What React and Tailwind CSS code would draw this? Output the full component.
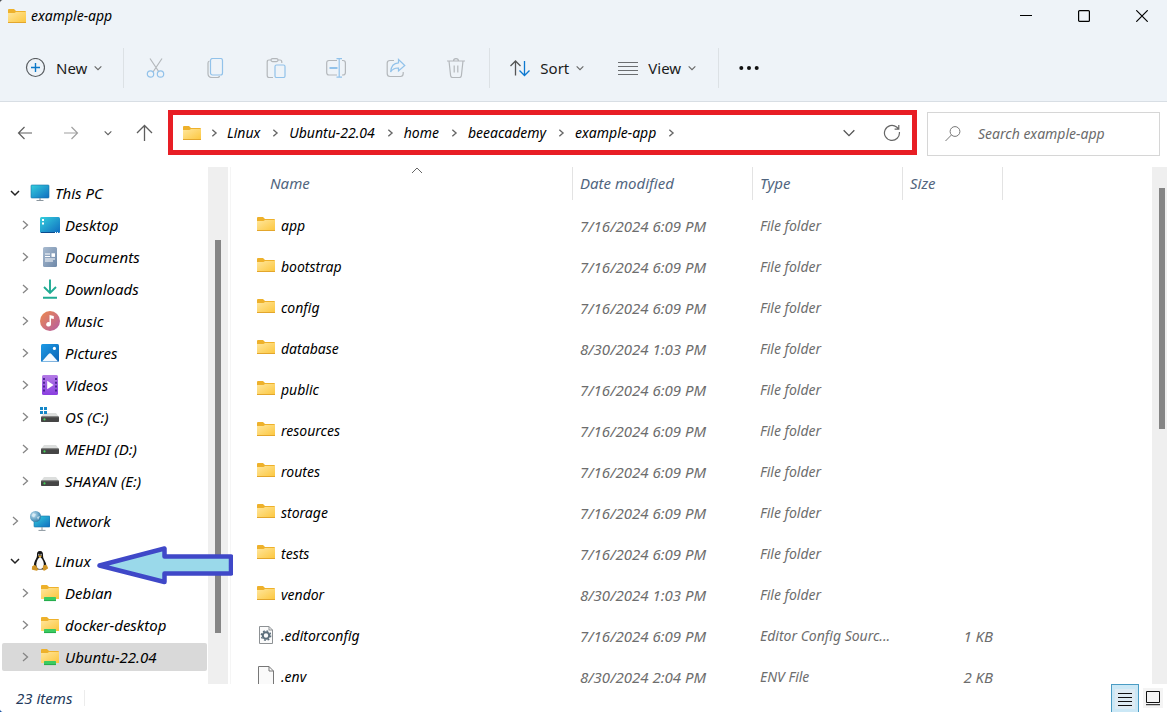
import React from 'react';

const chevronPaths = {
    right: 'M4 2 L8.5 6 L4 10',
    down: 'M2 4 L6 8 L10 4',
    up: 'M1 9 L6 4 L11 9',
};

const Chevron = ({ dir = 'right', className = '', width = 1.3 }) => (
    <svg viewBox="0 0 12 12" className={className} fill="none" stroke="currentColor" strokeWidth={width}>
        <path d={chevronPaths[dir]} />
    </svg>
);

// Shared gradients, referenced by id from the icons below
const Gradients = () => (
    <svg width="0" height="0" className="absolute" aria-hidden="true">
        <defs>
            <linearGradient id="folder" x1="0" y1="0" x2="1" y2="1">
                <stop offset="0" stopColor="#ffe69c" />
                <stop offset="1" stopColor="#fcc63c" />
            </linearGradient>
            <linearGradient id="screen" x1="0" y1="0" x2="1" y2="1">
                <stop offset="0" stopColor="#35d0dd" />
                <stop offset="1" stopColor="#0f6cc0" />
            </linearGradient>
            <linearGradient id="paper" x1="0" y1="0" x2="1" y2="1">
                <stop offset="0" stopColor="#a9bbd0" />
                <stop offset="1" stopColor="#6e88a8" />
            </linearGradient>
            <linearGradient id="music" x1="0" y1="0" x2="1" y2="1">
                <stop offset="0" stopColor="#ee8a4c" />
                <stop offset="1" stopColor="#b45ca4" />
            </linearGradient>
            <linearGradient id="video" x1="0" y1="0" x2="0" y2="1">
                <stop offset="0" stopColor="#b47be6" />
                <stop offset="1" stopColor="#8a3fe0" />
            </linearGradient>
            <linearGradient id="picture" x1="0" y1="0" x2="1" y2="1">
                <stop offset="0" stopColor="#1d9be6" />
                <stop offset="1" stopColor="#0a62b4" />
            </linearGradient>
            <radialGradient id="globe" cx="0.35" cy="0.35" r="0.7">
                <stop offset="0" stopColor="#c4e2f2" />
                <stop offset="1" stopColor="#2c7ba8" />
            </radialGradient>
        </defs>
    </svg>
);

const FolderIcon = ({ className = 'w-[18px] h-[14px]' }) => (
    <svg viewBox="0 0 18 14" className={className}>
        <path d="M0 1 Q0 0 1 0 H6 L8 2 H17 Q18 2 18 3 V6 H0 Z" fill="#eeb12b" />
        <path d="M0 4 H6.5 L8 3 H18 V13 Q18 14 17 14 H1 Q0 14 0 13 Z" fill="url(#folder)" />
        <path d="M0 13.5 H18" stroke="#e3a62c" />
    </svg>
);

const Monitor = () => (
    <>
        <rect x="1" y="2" width="18" height="13" rx="0.8" fill="url(#screen)" stroke="#1673a8" strokeWidth="0.6" />
        <path d="M10 15 V17 M6.5 17.5 H13.5" stroke="#8b969e" strokeWidth="1.2" />
    </>
);

const Drive = () => (
    <>
        <path d="M4 6 H16 L19 10 H1 Z" fill="#dcdedd" />
        <rect x="1" y="9.5" width="18" height="5.5" rx="0.8" fill="#454545" />
        <path d="M1.5 10 H18.5" stroke="#707070" strokeWidth="0.7" />
        <circle cx="4.5" cy="12.4" r="1.1" fill="#45d15a" />
    </>
);

const treeIcons = {
    pc: <Monitor />,
    desktop: (
        <>
            <rect x="0" y="2" width="20" height="16" rx="1.5" fill="url(#screen)" />
            <path d="M1 17.5 H15" stroke="#0b4b8d" strokeWidth="1" />
            <path d="M2 4 h2 v2 h-2 z M2 7.5 h2 v2 h-2 z M15 17 h1 v1 h-1 z M17 17 h1 v1 h-1 z" fill="#fff" />
        </>
    ),
    documents: (
        <>
            <rect x="3" y="0" width="14" height="20" rx="1.5" fill="url(#paper)" />
            <path d="M5 7 H10 M5 9.5 H10 M5 12 H15 M5 14 H13" stroke="#fff" strokeWidth="1.2" />
            <rect x="11.5" y="6.3" width="3.5" height="3.6" fill="#fff" />
        </>
    ),
    downloads: (
        <path d="M10 0.5 V14 M4 8 L10 14 L16 8 M3 18.8 H17" fill="none" stroke="#1fab93" strokeWidth="1.9" />
    ),
    music: (
        <>
            <circle cx="10" cy="10" r="10" fill="url(#music)" />
            <path d="M9.5 4 L13.8 5 V8 L11 7.4 V13.5 A2.4 2.2 0 1 1 9.5 11.3 Z" fill="#fff" />
        </>
    ),
    pictures: (
        <>
            <rect x="1" y="1" width="18" height="18" rx="1.5" fill="url(#picture)" />
            <path d="M2 18.5 L8.6 11 Q10 9.6 11.4 11 L18 18.5 Z" fill="#f2f9ff" />
            <circle cx="14.4" cy="5.4" r="1.6" fill="#fff" />
        </>
    ),
    videos: (
        <>
            <rect x="2" y="0" width="16" height="20" rx="1.5" fill="url(#video)" />
            <path d="M4 3 V18 M16 3 V18" stroke="#44208c" strokeWidth="1.8" strokeDasharray="2 1.8" />
            <path d="M7.2 5.8 L13.6 10 L7.2 14.2 Z" fill="#fff" />
        </>
    ),
    os: (
        <>
            <Drive />
            <path d="M0 0 h3 v3 h-3 z M4 0 h3 v3 h-3 z M0 4 h3 v3 h-3 z M4 4 h3 v3 h-3 z" fill="#1687c8" />
        </>
    ),
    drive: <Drive />,
    network: (
        <>
            <rect x="4" y="5" width="16" height="11" rx="0.8" fill="url(#screen)" stroke="#1673a8" strokeWidth="0.6" />
            <path d="M12 16 V19 M8.5 19.4 H15.5" stroke="#8b969e" strokeWidth="1" />
            <circle cx="5.5" cy="5.5" r="5.5" fill="url(#globe)" />
            <path d="M3 2 L6 3.5 L4 6.5 L1.5 5 Z M7 6 L10 5 L8 9 Z" fill="#e6f3f9" opacity="0.7" />
        </>
    ),
    linux: (
        <>
            <path d="M10 0 C7.4 0 6.8 1.8 7 4.6 C7.1 7 5 9 4.2 12 C3.6 14.4 3.8 17.6 6 18.4 H14 C16.4 17.6 16.6 14.2 15.8 12 C14.8 8.8 12.8 7.2 13 4.4 C13.1 1.6 12.4 0 10 0 Z" fill="#151515" />
            <path d="M10 6 C8 7.2 6.3 10.4 6.3 13.4 C6.3 16.6 7.6 18 10 18 C12.4 18 13.8 16.4 13.8 13.4 C13.8 10.4 12 7 10 6 Z" fill="#fafafa" />
            <ellipse cx="8.8" cy="3.7" rx="0.8" ry="1" fill="#aaa" />
            <ellipse cx="11.1" cy="3.7" rx="0.8" ry="1" fill="#aaa" />
            <path d="M8 5 L10 4.4 L12 5.1 L10 6.8 Z" fill="#efb02a" />
            <path d="M4.2 13.8 C5.5 13.8 6.8 16.2 7.8 17.4 C8.6 18.8 7.4 20 5.8 19.6 L2.2 18.8 C1.3 18.2 2.4 17 2 15.6 C2.2 14.8 3.6 15.2 4.2 13.8 Z" fill="#cf9426" />
            <path d="M15.8 13.8 C14.5 13.6 13.2 14.4 12.9 16 C12.6 18 12.4 19.4 14.2 19.7 C15.6 19.6 16 18.6 18 17.6 C18.6 17 17.4 16.2 17.2 14.8 Z" fill="#cf9426" />
        </>
    ),
    distro: (
        <>
            <path d="M1 3 Q1 2 2 2 H7 L9 4 H18 Q19 4 19 5 V8 H1 Z" fill="#eeb12b" />
            <path d="M1 6 H7.5 L9 5 H19 V16 H1 Z" fill="url(#folder)" />
            <rect x="4" y="14" width="12" height="4" rx="0.6" fill="#3bcb61" />
            <path d="M4 17.6 H16" stroke="#1ea146" strokeWidth="0.8" />
        </>
    ),
};

const treeGroups = [
    {
        label: 'This PC', icon: 'pc', open: true,
        children: [
            { label: 'Desktop', icon: 'desktop' },
            { label: 'Documents', icon: 'documents' },
            { label: 'Downloads', icon: 'downloads' },
            { label: 'Music', icon: 'music' },
            { label: 'Pictures', icon: 'pictures' },
            { label: 'Videos', icon: 'videos' },
            { label: 'OS (C:)', icon: 'os' },
            { label: 'MEHDI (D:)', icon: 'drive' },
            { label: 'SHAYAN (E:)', icon: 'drive' },
        ],
    },
    { label: 'Network', icon: 'network', children: [] },
    {
        label: 'Linux', icon: 'linux', open: true,
        children: [
            { label: 'Debian', icon: 'distro' },
            { label: 'docker-desktop', icon: 'distro' },
            { label: 'Ubuntu-22.04', icon: 'distro', selected: true },
        ],
    },
];

const files = [
    { name: 'app', date: '7/16/2024 6:09 PM', type: 'File folder' },
    { name: 'bootstrap', date: '7/16/2024 6:09 PM', type: 'File folder' },
    { name: 'config', date: '7/16/2024 6:09 PM', type: 'File folder' },
    { name: 'database', date: '8/30/2024 1:03 PM', type: 'File folder' },
    { name: 'public', date: '7/16/2024 6:09 PM', type: 'File folder' },
    { name: 'resources', date: '7/16/2024 6:09 PM', type: 'File folder' },
    { name: 'routes', date: '7/16/2024 6:09 PM', type: 'File folder' },
    { name: 'storage', date: '7/16/2024 6:09 PM', type: 'File folder' },
    { name: 'tests', date: '7/16/2024 6:09 PM', type: 'File folder' },
    { name: 'vendor', date: '8/30/2024 1:03 PM', type: 'File folder' },
    { name: '.editorconfig', date: '7/16/2024 6:09 PM', type: 'Editor Config Sourc...', size: '1 KB', icon: 'config' },
    { name: '.env', date: '8/30/2024 2:04 PM', type: 'ENV File', size: '2 KB', icon: 'file' },
];

const crumbs = ['Linux', 'Ubuntu-22.04', 'home', 'beeacademy', 'example-app'];

// Disabled file actions: grey outline with a light blue accent
const fileActions = [
    {
        label: 'Cut',
        art: (
            <>
                <path d="M4 0.5 L13 14 M16 0.5 L7 14" stroke="#b3b7bb" />
                <circle cx="4.5" cy="16" r="3.2" stroke="#92c2ea" />
                <circle cx="14.5" cy="16" r="3.2" stroke="#92c2ea" />
            </>
        ),
    },
    {
        label: 'Copy',
        art: (
            <>
                <path d="M3.5 3 Q2 3.4 2 5 V15.5 Q2 19.5 6 19.5 H11.5 Q13.2 19.5 13.6 18" stroke="#b3b7bb" />
                <rect x="4.5" y="0.5" width="12" height="16.5" rx="2" stroke="#92c2ea" />
            </>
        ),
    },
    {
        label: 'Paste',
        art: (
            <>
                <path d="M5 2 H3 Q1.2 2 1.2 4 V17.5 Q1.2 19.5 3 19.5 H7 M12 2 H14 Q15.8 2 15.8 4 V5" stroke="#b3b7bb" />
                <rect x="5" y="0.6" width="7" height="3" rx="1.5" stroke="#b3b7bb" />
                <rect x="9" y="7" width="10" height="12.5" rx="1.5" stroke="#92c2ea" />
            </>
        ),
    },
    {
        label: 'Rename',
        art: (
            <>
                <path d="M11 2.5 H3 Q0.7 2.5 0.7 5 V14.5 Q0.7 17 3 17 H11 M16 2.5 H17 Q19.4 2.5 19.4 5 V14.5 Q19.4 17 17 17 H16" stroke="#b3b7bb" />
                <path d="M10.5 0.6 H16 M10.5 19.2 H16 M13.2 0.6 V19.2" stroke="#92c2ea" />
                <path d="M3.5 10 H11.5" stroke="#92c2ea" strokeWidth="2" />
            </>
        ),
    },
    {
        label: 'Share',
        art: (
            <>
                <path d="M8 2.5 H4 Q1.2 2.5 1.2 5 V15.5 Q1.2 18.5 4 18.5 H14.5 Q17.2 18.5 17.2 15.5 V14" stroke="#b3b7bb" />
                <path d="M12.5 1.5 L18.8 7.5 L12.5 13 V10 C8.6 9.8 6.5 11 4.6 14 C5 8.5 8 5 12.5 4.8 Z" stroke="#92c2ea" />
            </>
        ),
    },
    {
        label: 'Delete',
        art: (
            <path d="M1 3 H19 M7.5 3 Q7.5 0.6 10 0.6 Q12.5 0.6 12.5 3 M3 3 L4.6 17.5 Q4.8 19.5 6.6 19.5 H13.4 Q15.2 19.5 15.4 17.5 L17 3 M8.2 7.5 V14.5 M11.8 7.5 V14.5" stroke="#b3b7bb" />
        ),
    },
];

const TitleBar = () => (
    <div className="flex h-8 items-center pl-2 pr-[2px]">
        <FolderIcon />
        <h1 className="ml-[5px] flex-1 text-sm italic">example-app</h1>
        <div className="flex gap-3">
            <button type="button" aria-label="Minimize" className="flex h-[30px] w-[46px] items-center justify-center">
                <svg viewBox="0 0 12 12" className="size-3"><path d="M0 5.5 H12" stroke="#000" /></svg>
            </button>
            <button type="button" aria-label="Maximize" className="flex h-[30px] w-[46px] items-center justify-center">
                <svg viewBox="0 0 12 12" className="size-3"><rect x="0.6" y="0.6" width="10.8" height="10.8" rx="1" fill="none" stroke="#000" strokeWidth="1.2" /></svg>
            </button>
            <button type="button" aria-label="Close" className="flex h-[30px] w-[46px] items-center justify-center">
                <svg viewBox="0 0 12 12" className="size-3"><path d="M0.3 0.3 L11.7 11.7 M11.7 0.3 L0.3 11.7" stroke="#000" strokeWidth="1.2" /></svg>
            </button>
        </div>
    </div>
);

const Separator = () => <div className="h-10 w-px bg-[#dce1e5]" />;

const Toolbar = () => (
    <div className="flex h-[69px] items-center pb-px pt-1 text-[15px] text-[#1b1b1b]">
        <button type="button" className="flex items-center pl-[25px] pr-5">
            <svg viewBox="0 0 20 20" className="size-5" fill="none">
                <circle cx="10.5" cy="9.5" r="9" stroke="#5a5e62" strokeWidth="1.2" />
                <path d="M10.5 5 V14 M6 9.5 H15" stroke="#0c78c8" strokeWidth="1.4" />
            </svg>
            <span className="ml-[11px]">New</span>
            <Chevron dir="down" className="ml-[6px] size-[10px] text-[#666]" />
        </button>
        <Separator />
        <div className="flex gap-10 pl-[22px] pr-[23px]">
            {fileActions.map((action) => (
                <button key={action.label} type="button" aria-label={action.label} disabled>
                    <svg viewBox="0 0 20 20" className="size-5" fill="none" strokeWidth="1.2">{action.art}</svg>
                </button>
            ))}
        </div>
        <Separator />
        <button type="button" className="flex items-center pl-5">
            <svg viewBox="0 0 20 20" className="size-5" fill="none" strokeWidth="1.3">
                <path d="M5.5 17.5 V3 M0.5 8 L5.5 3 L10.5 8" stroke="#555" />
                <path d="M14.5 3 V17.5 M9.5 12.5 L14.5 17.5 L19.5 12.5" stroke="#0c78d0" />
            </svg>
            <span className="ml-[10px]">Sort</span>
            <Chevron dir="down" className="ml-[6px] size-[10px] text-[#666]" />
        </button>
        <button type="button" className="flex items-center pl-[33px] pr-[21px]">
            <svg viewBox="0 0 20 20" className="size-5" fill="none">
                <path d="M0 4.5 H20 M0 8.5 H20 M0 12.5 H20 M0 16.5 H20" stroke="#6b6e71" />
            </svg>
            <span className="ml-[10px]">View</span>
            <Chevron dir="down" className="ml-[6px] size-[10px] text-[#666]" />
        </button>
        <Separator />
        <button type="button" aria-label="See more" className="px-5">
            <svg viewBox="0 0 20 20" className="size-5" fill="#111">
                <circle cx="2.3" cy="10" r="2" />
                <circle cx="10" cy="10" r="2" />
                <circle cx="17.7" cy="10" r="2" />
            </svg>
        </button>
    </div>
);

const AddressRow = () => (
    <div className="flex h-[65px] items-center pb-1 pr-[7px] text-sm italic">
        <div className="flex w-[168px] items-center pl-[17px]">
            <button type="button" aria-label="Back">
                <svg viewBox="0 0 16 16" className="size-4" fill="none" stroke="#5e5e5e" strokeWidth="1.2"><path d="M15 8 H1.5 M7.5 2 L1.5 8 L7.5 14" /></svg>
            </button>
            <button type="button" aria-label="Forward" className="ml-[30px]">
                <svg viewBox="0 0 16 16" className="size-4" fill="none" stroke="#a0a0a0" strokeWidth="1.2"><path d="M1 8 H14.5 M8.5 2 L14.5 8 L8.5 14" /></svg>
            </button>
            <button type="button" aria-label="Recent locations" className="ml-6">
                <Chevron dir="down" className="size-[10px] text-[#5e5e5e]" />
            </button>
            <button type="button" aria-label="Up" className="ml-[22px]">
                <svg viewBox="0 0 18 18" className="size-[18px]" fill="none" stroke="#5e5e5e" strokeWidth="1.3"><path d="M9.5 17 V1.5 M2 9 L9.5 1.5 L17 9" /></svg>
            </button>
        </div>
        <nav className="flex h-[45px] flex-1 items-center border-5 border-[#e81e25] pl-[10px] pt-px">
            <FolderIcon />
            <Chevron width={1.6} className="mx-[8px] size-[10px] text-[#666]" />
            {crumbs.map((crumb) => (
                <React.Fragment key={crumb}>
                    <a href="#">{crumb}</a>
                    <Chevron width={1.6} className="ml-[10px] mr-[9px] size-[10px] text-[#666]" />
                </React.Fragment>
            ))}
            <button type="button" aria-label="Previous locations" className="ml-auto">
                <Chevron dir="down" width={1} className="size-4 text-[#555]" />
            </button>
            <button type="button" aria-label="Refresh" className="ml-[26px] mr-[11px]">
                <svg viewBox="0 0 18 18" className="size-[18px]" fill="none" stroke="#666" strokeWidth="1.2">
                    <path d="M16.4 8 A7.5 7.5 0 1 1 13.6 3 L15.8 5 M15.8 1 V5.2 H11.6" />
                </svg>
            </button>
        </nav>
        <label className="ml-[10px] mt-[2px] flex h-[44px] w-[233px] items-center border border-[#d6d6d6] pl-[17px]">
            <svg viewBox="0 0 16 16" className="size-4 shrink-0" fill="none" stroke="#777">
                <circle cx="10" cy="5.5" r="4.9" />
                <path d="M6.4 9 L0.5 15" />
            </svg>
            <input
                type="text"
                aria-label="Search"
                placeholder="Search example-app"
                className="ml-[17px] min-w-0 flex-1 italic outline-none placeholder:text-[#6b6b6b]"
            />
        </label>
    </div>
);

const TreeRow = ({ item, child = false }) => (
    <div className="h-8 py-[2px] pl-[2px] pr-px">
        <button
            type="button"
            className={`flex h-7 w-full items-center rounded-xs ${child ? 'pl-[17px]' : 'pl-[7px]'} ${item.selected ? 'bg-[#d9d9d9]' : ''}`}
        >
            <Chevron
                dir={item.open ? 'down' : 'right'}
                width={item.open ? 1.5 : 1.3}
                className={`size-3 ${item.open ? 'text-[#222]' : 'text-[#858585]'}`}
            />
            <svg viewBox="0 0 20 20" className="ml-[9px] size-5">{treeIcons[item.icon]}</svg>
            <span className="ml-[5px] whitespace-nowrap">{item.label}</span>
        </button>
    </div>
);

const Sidebar = () => (
    <aside className="flex w-[231px] shrink-0 border-r border-[#f5f5f5] text-[15px] italic">
        <div className="flex flex-1 flex-col gap-2 overflow-hidden pt-[10px]">
            {treeGroups.map((group) => (
                <div key={group.label}>
                    <TreeRow item={group} />
                    {group.children.map((item) => (
                        <TreeRow key={item.label} item={item} child />
                    ))}
                </div>
            ))}
        </div>
        <div className="mr-[2px] w-5 bg-[#efefef] pl-[7px] pt-[73px]">
            <div className="h-[88.5%] w-[6px] bg-[#858585]" />
        </div>
    </aside>
);

const FileIcon = ({ kind }) => {
    if (kind === 'config') {
        return (
            <svg viewBox="0 0 18 20" className="mb-[2px] h-5 w-[18px]" fill="none">
                <path d="M2.5 1.5 H12 L15.5 5 V18.5 H2.5 Z M12 1.5 V5 H15.5" fill="#fbfbfb" stroke="#8d9194" />
                <circle cx="9" cy="10.5" r="3.2" stroke="#5d6f7c" strokeWidth="2" />
                <circle cx="9" cy="10.5" r="4.7" stroke="#5d6f7c" strokeWidth="1.4" strokeDasharray="1.85 1.84" />
            </svg>
        );
    }
    if (kind === 'file') {
        return (
            <svg viewBox="0 0 18 20" className="mb-[2px] h-5 w-[18px]">
                <path d="M1.5 0.5 H12 L16.5 5 V19.5 H1.5 Z M12 0.5 V5 H16.5" fill="#fafafa" stroke="#777" />
            </svg>
        );
    }
    return <FolderIcon className="mb-1 h-[14px] w-[18px]" />;
};

const FileTable = () => (
    <div className="relative min-w-0 flex-1 overflow-hidden">
        <Chevron dir="up" width={1} className="absolute left-[180px] top-[-3px] size-3 text-[#666]" />
        <table className="w-full table-fixed text-left text-sm italic">
            <colgroup>
                <col className="w-[341px]" />
                <col className="w-[180px]" />
                <col className="w-[150px]" />
                <col className="w-[100px]" />
                <col />
            </colgroup>
            <thead className="text-[15px] text-[#51657e]">
                <tr className="h-[38px] align-top">
                    <th scope="col" className="p-0 font-normal"><div className="h-[33px] pl-[39px] leading-[33px]">Name</div></th>
                    {['Date modified', 'Type', 'Size'].map((header) => (
                        <th key={header} scope="col" className="p-0 font-normal">
                            <div className="h-[33px] border-l border-[#e3e3e3] pl-[7px] leading-[33px]">{header}</div>
                        </th>
                    ))}
                    <td className="p-0"><div className="h-[33px] border-l border-[#e3e3e3]" /></td>
                </tr>
            </thead>
            <tbody className="leading-[14px] text-[#6d6d6d]">
                {files.map((file) => (
                    <tr key={file.name} className="h-[41px]">
                        <td className="p-0 pl-[26px] text-black">
                            <div className="flex items-center gap-[6px]">
                                <FileIcon kind={file.icon} />
                                {file.name}
                            </div>
                        </td>
                        <td className="p-0 pl-2 text-[15px]">{file.date}</td>
                        <td className="whitespace-nowrap p-0 pl-2">{file.type}</td>
                        <td className="p-0 pr-[9px] text-right text-[15px]">{file.size}</td>
                        <td className="p-0" />
                    </tr>
                ))}
            </tbody>
        </table>
    </div>
);

// Block arrow pointing at the Linux entry of the tree
const PointerArrow = () => (
    <svg viewBox="0 0 136 40" className="absolute left-[97px] top-[378px] h-10 w-[136px]">
        <path
            d="M2.5 20.5 L67.5 3.5 V11.5 H134 V28.5 H67.5 V37 Z"
            fill="#9ad9ea"
            stroke="#3f48c8"
            strokeWidth="4.5"
            strokeLinejoin="round"
        />
    </svg>
);

const StatusBar = () => (
    <footer className="flex h-7 items-center bg-white pl-4 text-[15px] italic text-[#233a5c]">
        <span>23 items</span>
        <div className="ml-3 h-4 w-px bg-[#ececec]" />
        <button type="button" aria-label="Details view" className="ml-auto flex h-7 w-7 items-center justify-center border border-b-0 border-[#4a9cc4] bg-[#cbe8f6]">
            <svg viewBox="0 0 20 20" className="size-5 bg-[#deebf3]">
                <path d="M3 4.5 H17 M3 8.5 H17 M3 12.5 H17 M3 16.5 H17" stroke="#111" />
            </svg>
        </button>
        <button type="button" aria-label="Large icons view" className="ml-1 mr-1 flex size-5 items-center justify-center bg-[#f4f4f4]">
            <svg viewBox="0 0 20 20" className="size-5">
                <path d="M3.5 3.5 H16.5 V14.5 H3.5 Z M3 16.7 H17" fill="none" stroke="#111" />
            </svg>
        </button>
    </footer>
);

const App = () => (
    <div className="h-screen bg-linear-to-b from-[#4b4f55] to-[#1f57a6] font-['Noto_Sans','Open_Sans',sans-serif] text-black">
        <Gradients />
        <div className="flex h-full flex-col overflow-hidden rounded-l-sm bg-white">
            <header className="border-b border-[#d8dee4] bg-[#eef3f8]">
                <TitleBar />
                <Toolbar />
            </header>
            <AddressRow />
            <main className="relative flex min-h-0 flex-1">
                <Sidebar />
                <FileTable />
                <div className="w-[15px] shrink-0 bg-[#efefef] pl-[7px] pt-[21px]">
                    <div className="h-[48.5%] w-[6px] bg-[#858585]" />
                </div>
                <PointerArrow />
            </main>
            <StatusBar />
        </div>
    </div>
);

export default App;
